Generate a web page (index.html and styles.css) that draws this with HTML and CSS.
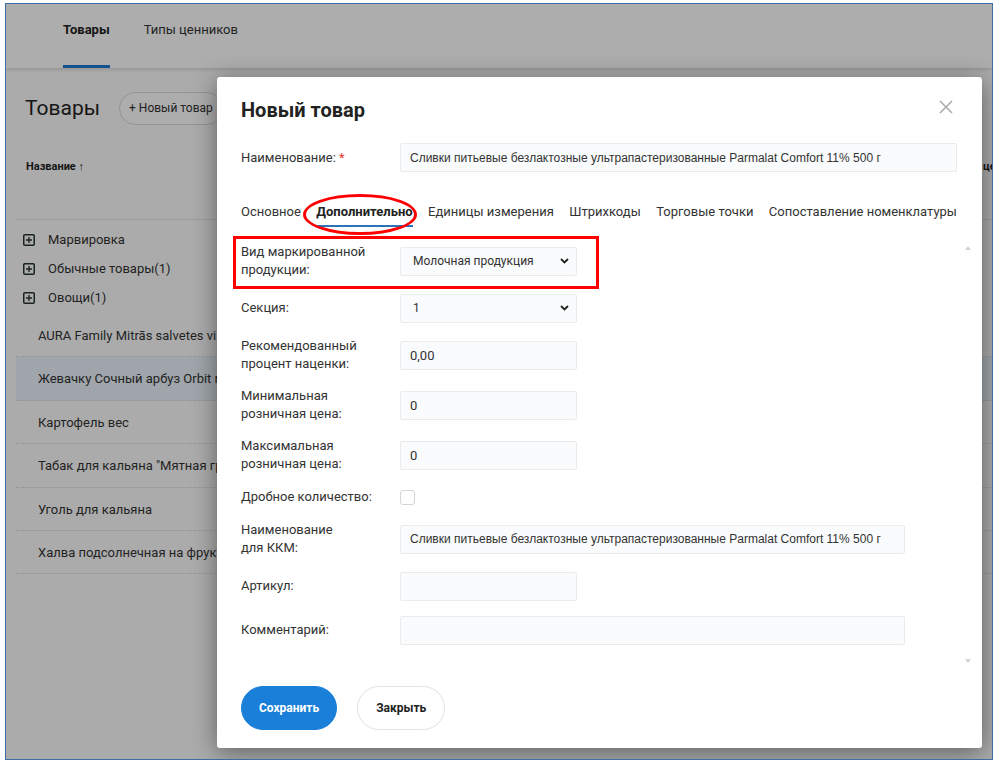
FILE: index.html
```html
<!DOCTYPE html>
<html lang="ru">
<head>
  <meta charset="UTF-8" />
  <meta name="viewport" content="width=device-width, initial-scale=1.0" />
  <title>Товары</title>
  <link rel="stylesheet" href="styles.css">
</head>
<body>
  <div class="screen">
    <header class="topbar">
      <nav class="topnav">
        <a class="topnav-item active">Товары</a>
        <a class="topnav-item">Типы ценников</a>
      </nav>
    </header>

    <main class="page">
      <div class="page-head">
        <h1>Товары</h1>
        <button class="btn-new">+ Новый товар</button>
      </div>
      <div class="grid">
        <div class="grid-head">
          <div class="col-name">Название ↑</div>
          <div class="col-price">цена</div>
        </div>
        <div class="groups">
          <div class="group">
            <svg class="plus" width="12" height="12" viewBox="0 0 12 12"><rect x="0.75" y="0.75" width="10.5" height="10.5" rx="1" fill="none" stroke="#26362d" stroke-width="1.5"/><path d="M6 3v6M3 6h6" stroke="#26362d" stroke-width="1.4"/></svg>
            Марвировка
          </div>
          <div class="group">
            <svg class="plus" width="12" height="12" viewBox="0 0 12 12"><rect x="0.75" y="0.75" width="10.5" height="10.5" rx="1" fill="none" stroke="#26362d" stroke-width="1.5"/><path d="M6 3v6M3 6h6" stroke="#26362d" stroke-width="1.4"/></svg>
            Обычные товары(1)
          </div>
          <div class="group">
            <svg class="plus" width="12" height="12" viewBox="0 0 12 12"><rect x="0.75" y="0.75" width="10.5" height="10.5" rx="1" fill="none" stroke="#26362d" stroke-width="1.5"/><path d="M6 3v6M3 6h6" stroke="#26362d" stroke-width="1.4"/></svg>
            Овощи(1)
          </div>
        </div>
        <div class="item"><span class="item-name">AURA Family Mitrās salvetes visām ģimenes vajadzībām</span></div>
        <div class="item selected"><span class="item-name">Жевачку Сочный арбуз Orbit мята</span></div>
        <div class="item"><span class="item-name">Картофель вес</span></div>
        <div class="item"><span class="item-name">Табак для кальяна "Мятная груша"</span></div>
        <div class="item"><span class="item-name">Уголь для кальяна</span></div>
        <div class="item"><span class="item-name">Халва подсолнечная на фруктозе</span></div>
      </div>
    </main>

    <div class="overlay"></div>

    <div class="modal">
      <div class="modal-head">
        <h2 class="modal-title">Новый товар</h2>
        <button class="modal-close">
          <svg width="14" height="14" viewBox="0 0 14 14"><path d="M1 1l12 12M13 1L1 13" stroke="#a9a9a9" stroke-width="1.5"/></svg>
        </button>
      </div>

      <div class="name-row">
        <div class="label">Наименование: <span class="req">*</span></div>
        <input class="input full" value="Сливки питьевые безлактозные ультрапастеризованные Parmalat Comfort 11% 500 г">
      </div>

      <div class="tabs">
        <span class="tab">Основное</span>
        <span class="tab active">Дополнительно</span>
        <span class="tab">Единицы измерения</span>
        <span class="tab">Штрихкоды</span>
        <span class="tab">Торговые точки</span>
        <span class="tab">Сопоставление номенклатуры</span>
      </div>

      <div class="form-scroll">
        <div class="form-row marked">
          <div class="label">Вид маркированной<br>продукции:</div>
          <div class="select">
            <span>Молочная продукция</span>
            <svg width="9" height="6" viewBox="0 0 9 6"><path d="M1 1l3.5 3.5L8 1" fill="none" stroke="#222" stroke-width="1.8"/></svg>
          </div>
        </div>
        <div class="form-row">
          <div class="label">Секция:</div>
          <div class="select">
            <span>1</span>
            <svg width="9" height="6" viewBox="0 0 9 6"><path d="M1 1l3.5 3.5L8 1" fill="none" stroke="#222" stroke-width="1.8"/></svg>
          </div>
        </div>
        <div class="form-row">
          <div class="label">Рекомендованный<br>процент наценки:</div>
          <input class="input short" value="0,00">
        </div>
        <div class="form-row">
          <div class="label">Минимальная<br>розничная цена:</div>
          <input class="input short" value="0">
        </div>
        <div class="form-row">
          <div class="label">Максимальная<br>розничная цена:</div>
          <input class="input short" value="0">
        </div>
        <div class="form-row check-row">
          <div class="label">Дробное количество:</div>
          <span class="check"></span>
        </div>
        <div class="form-row">
          <div class="label">Наименование<br>для ККМ:</div>
          <input class="input wide" value="Сливки питьевые безлактозные ультрапастеризованные Parmalat Comfort 11% 500 г">
        </div>
        <div class="form-row">
          <div class="label">Артикул:</div>
          <input class="input short" value="">
        </div>
        <div class="form-row">
          <div class="label">Комментарий:</div>
          <input class="input wide" value="">
        </div>
      </div>

      <div class="modal-foot">
        <button class="btn btn-primary">Сохранить</button>
        <button class="btn btn-light">Закрыть</button>
      </div>
    </div>
  </div>
</body>
</html>
```

FILE: styles.css
```css
body {
  margin: 0;
  background: #fff;
  font-family: Roboto, "Liberation Sans", sans-serif;
  color: #333;
}
.screen {
  position: relative;
  width: 988px;
  height: 757px;
  margin: 3px 0 0 5px;
  border: 1px solid #3c6ea6;
  box-sizing: border-box;
  overflow: hidden;
  background: #fdfdfd;
}

/* page under the dialog */
.topbar {
  position: relative;
  height: 64px;
  background: #fff;
  box-shadow: 0 2px 4px rgba(0, 0, 0, 0.14);
}
.topnav {
  display: flex;
  gap: 34px;
  padding-left: 57px;
}
.topnav-item {
  height: 64px;
  box-sizing: border-box;
  padding-top: 16px;
  line-height: 20px;
  font-size: 13px;
  color: #333;
  border-bottom: 3px solid transparent;
}
.topnav-item.active {
  font-weight: 700;
  color: #222;
  border-color: #1f78d1;
}
.page {
  padding-left: 10px;
}
.page-head {
  display: flex;
  align-items: center;
  gap: 19px;
  padding: 23px 0 13px 9px;
}
.page-head h1 {
  margin: 0;
  font-size: 21px;
  font-weight: 400;
  line-height: 34px;
  color: #222;
}
.btn-new {
  height: 33px;
  padding: 0 9px;
  border: 1px solid #d9d9d9;
  border-radius: 17px;
  background: #fff;
  font-family: Roboto, sans-serif;
  font-size: 12px;
  color: #333;
}
.grid-head {
  display: flex;
  height: 82px;
  box-sizing: border-box;
  padding-top: 22px;
  border-bottom: 1px solid #e6e6e6;
  font-size: 11px;
  font-weight: 700;
  line-height: 14px;
  color: #222;
  white-space: nowrap;
}
.col-name {
  flex: none;
  width: 967px;
  padding-left: 10px;
  box-sizing: border-box;
}
.groups {
  padding: 5px 0 2px;
}
.group {
  display: flex;
  align-items: center;
  gap: 13px;
  height: 29px;
  padding-left: 7px;
  font-size: 13px;
}
.item {
  height: 43.4px;
  box-sizing: border-box;
  padding-left: 22px;
  line-height: 43px;
  font-size: 13px;
  white-space: nowrap;
  border-bottom: 1px dotted #d6d6d6;
}
.item-name {
  display: block;
  width: 185px;
  overflow: hidden;
}
.item.selected {
  background: #eaf3fb;
}
.overlay {
  position: absolute;
  inset: 0;
  background: rgba(0, 0, 0, 0.32);
}

/* dialog */
.modal {
  position: absolute;
  left: 211px;
  top: 73px;
  width: 765px;
  box-sizing: border-box;
  padding: 21px 25px 18px 24px;
  background: #fff;
  border-radius: 3px;
  box-shadow: 0 4px 24px rgba(0, 0, 0, 0.45);
}
.modal-head {
  display: flex;
  justify-content: space-between;
  align-items: flex-start;
  height: 24px;
}
.modal-title {
  margin: 0;
  font-size: 20px;
  font-weight: 700;
  line-height: 24px;
  color: #222;
}
.modal-close {
  width: 14px;
  height: 14px;
  margin: 2px 4px 0 0;
  padding: 0;
  border: 0;
  background: none;
}
.name-row {
  display: flex;
  align-items: center;
  margin-top: 21px;
}
.label {
  flex: none;
  width: 159px;
  font-size: 13px;
  line-height: 18px;
  color: #333;
}
.req {
  color: #e53935;
}
.input {
  height: 29px;
  box-sizing: border-box;
  padding: 0 9px;
  border: 1px solid #ebebeb;
  border-radius: 2px;
  background: #fafbfc;
  font: 12px "Liberation Sans", Arial, sans-serif;
  color: #333;
}
.input.full {
  flex: 1;
}
.input.wide {
  width: 505px;
}
.input.short {
  width: 177px;
  font-family: Roboto, sans-serif;
  font-size: 13px;
}
.tabs {
  display: flex;
  justify-content: space-between;
  margin-top: 26px;
}
.tab {
  padding: 6px 0 5px;
  line-height: 16px;
  font-size: 13px;
  color: #333;
  border-bottom: 2px solid transparent;
  white-space: nowrap;
}
.tab.active {
  position: relative;
  font-weight: 700;
  color: #222;
  border-color: #2b72b9;
}
.tab.active::after {
  content: "";
  position: absolute;
  left: -13px;
  right: -4px;
  top: -4px;
  bottom: -10px;
  border: 3px solid #f00;
  border-radius: 50%;
}
.form-scroll {
  position: relative;
  display: flex;
  flex-direction: column;
  gap: 14px;
  margin-right: -20px;
  padding: 16px 20px 25px 0;
}
.form-scroll::before,
.form-scroll::after {
  content: "";
  position: absolute;
  right: 6px;
  border-left: 3px solid transparent;
  border-right: 3px solid transparent;
}
.form-scroll::before {
  top: 19px;
  border-bottom: 4px solid #d4d4d4;
}
.form-scroll::after {
  bottom: 7px;
  border-top: 4px solid #d4d4d4;
}
.form-row {
  display: flex;
  align-items: center;
  min-height: 30px;
}
.form-row.marked {
  position: relative;
  align-self: flex-start;
}
.form-row.marked::after {
  content: "";
  position: absolute;
  left: -8px;
  right: -22px;
  top: -7px;
  bottom: -10px;
  border: 3px solid #f00;
}
.form-row.check-row {
  min-height: 20px;
}
.select {
  display: flex;
  align-items: center;
  justify-content: space-between;
  width: 177px;
  height: 29px;
  box-sizing: border-box;
  padding: 0 7px 0 12px;
  border: 1px solid #ebebeb;
  border-radius: 2px;
  background: #fafbfc;
  font-size: 12px;
  color: #333;
}
.check {
  width: 15px;
  height: 15px;
  box-sizing: border-box;
  border: 1px solid #d6d6d6;
  border-radius: 3px;
  background: #fff;
}
.modal-foot {
  display: flex;
  gap: 20px;
  margin-top: 16px;
}
.btn {
  height: 44px;
  padding: 0 17px;
  border-radius: 22px;
  font-family: Roboto, sans-serif;
  font-size: 12px;
  font-weight: 700;
}
.btn-primary {
  background: #1a7fd9;
  border: 1px solid #1a7fd9;
  color: #fff;
}
.btn-light {
  padding: 0 18px;
  background: #fff;
  border: 1px solid #e2e2e2;
  color: #222;
}
```
